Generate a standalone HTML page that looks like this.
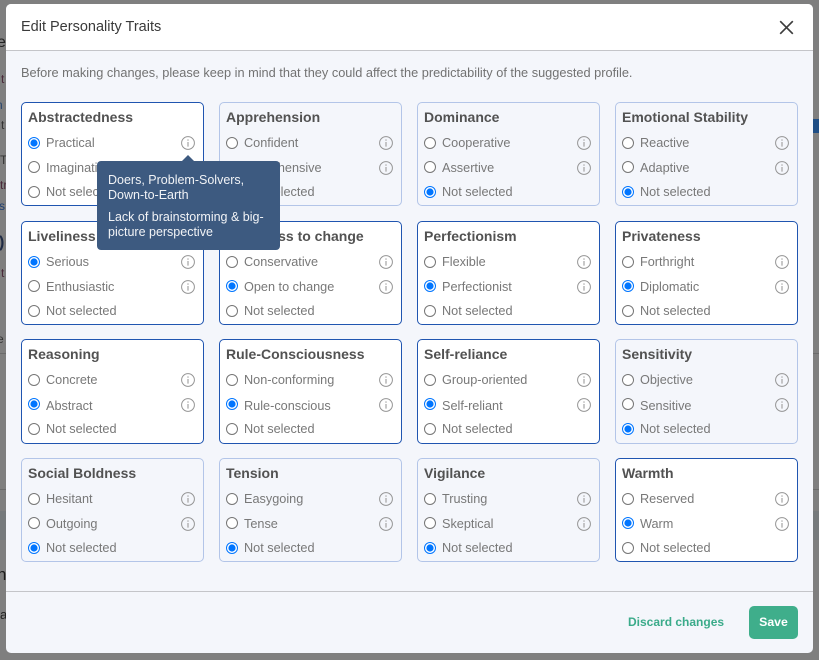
<!DOCTYPE html>
<html>
<head>
<meta charset="utf-8">
<style>
html,body{margin:0;padding:0;width:819px;height:660px;overflow:hidden;background:#7f7f7f;font-family:"Liberation Sans",sans-serif}
.bg{position:absolute;white-space:nowrap;line-height:16px}
.ln{position:absolute;left:0;width:819px;height:1px;background:#6b6b6b}
.band{position:absolute;left:0;width:819px;top:511px;height:29px;background:#767a7c}
.modal{position:absolute;left:6px;top:4px;width:807px;height:649px;background:#f4f6fb;border-radius:5px;overflow:hidden}
.head{position:absolute;left:0;top:0;width:807px;height:46px;background:#fff;border-bottom:1px solid #c4c5c9}
.foot{position:absolute;left:0;top:587px;width:807px;height:1px;background:#c4c5c9}
.t{position:absolute;white-space:nowrap}
.card{position:absolute;width:181px;height:102px;border:1px solid #b3c5e8;border-radius:5px}
.card.a{border-color:#2055b0;background:#fff}
.card b{position:absolute;left:6px;top:6px;font-size:14px;line-height:17px;color:#525252;white-space:nowrap}
.card input{position:absolute;left:6px;margin:0;width:12px;height:12px}
.card span{position:absolute;left:24px;font-size:12.7px;line-height:16px;color:#787878;white-space:nowrap}
.card svg{position:absolute;left:159px;width:14px;height:14px}
.i1{top:34px}.s1{top:32px}.v1{top:33px}
.i2{top:58px}.s2{top:57px}.v2{top:58px}
.i3{top:83px}.s3{top:81px}
.r3 .s2{top:58px}
.tip{position:absolute;left:97px;top:161px;width:183px;height:89px;background:#3d5a80;border-radius:4px}
.arrow{position:absolute;left:182px;top:155px;width:0;height:0;border-left:6px solid transparent;border-right:6px solid transparent;border-bottom:6px solid #3d5a80}
.tip div{position:absolute;left:11px;font-size:12.5px;line-height:15px;color:#f1f3f6;white-space:nowrap}
.save{position:absolute;left:749px;top:606px;width:49px;height:33px;background:#3fae8b;border-radius:5px;color:#fff;font-weight:bold;font-size:12.3px;line-height:33px;text-align:center}
</style>
</head>
<body>
<svg width="0" height="0" style="position:absolute"><defs><symbol id="n" viewBox="0 0 14 14"><circle cx="7" cy="7" r="6.4" fill="none" stroke="#949494" stroke-width="1"/><path d="M7 3.4v1.3M7 6v4.6" fill="none" stroke="#a4a4a4" stroke-width="1.2"/></symbol></defs></svg>

<div class="band"></div>
<div class="ln" style="top:353px"></div>
<div class="ln" style="top:489px"></div>
<div style="position:absolute;left:813px;top:119px;width:6px;height:14px;background:#1f4e85"></div>
<div class="bg" style="left:-3px;top:35px;font-size:16px;color:#222">e</div>
<div class="bg" style="left:1px;top:71px;font-size:12px;color:#4a2a3a">t</div>
<div class="bg" style="left:-4px;top:97px;font-size:12px;color:#26456e">n</div>
<div class="bg" style="left:1px;top:117px;font-size:12px;color:#333">t</div>
<div class="bg" style="left:0;top:152px;font-size:12px;color:#333">T</div>
<div class="bg" style="left:0;top:177px;font-size:12px;color:#4a2a3a">tr</div>
<div class="bg" style="left:-1px;top:198px;font-size:12px;color:#1e3f72">s</div>
<div class="bg" style="left:-1px;top:235px;font-size:16px;font-weight:bold;color:#1e2a44">)</div>
<div class="bg" style="left:1px;top:265px;font-size:12px;color:#4a2a3a">t</div>
<div class="bg" style="left:-3px;top:331px;font-size:12px;color:#333">e</div>
<div class="bg" style="left:-3px;top:567px;font-size:17px;color:#1b1b1b">n</div>
<div class="bg" style="left:0;top:607px;font-size:13px;color:#222">a</div>

<div class="modal">
<div class="head"></div>
<div class="foot"></div>
</div>

<div class="t" style="left:21px;top:18px;font-size:14.5px;line-height:18px;color:#3a3a3a">Edit Personality Traits</div>
<svg style="position:absolute;left:779px;top:20px" width="15" height="15" viewBox="0 0 15 15"><path d="M1.2 1.2L13.8 13.8M13.8 1.2L1.2 13.8" stroke="#3c3c3c" stroke-width="1.7" fill="none"/></svg>
<div class="t" style="left:21px;top:65px;font-size:12.78px;line-height:16px;color:#727272">Before making changes, please keep in mind that they could affect the predictability of the suggested profile.</div>

<!-- Row 1 -->
<div class="card a" style="left:21px;top:102px"><b>Abstractedness</b>
<input type="radio" class="i1" name="a1" checked><span class="s1">Practical</span><svg class="v1"><use href="#n"/></svg>
<input type="radio" class="i2" name="a1"><span class="s2">Imaginative</span><svg class="v2"><use href="#n"/></svg>
<input type="radio" class="i3" name="a1"><span class="s3">Not selected</span></div>
<div class="card" style="left:219px;top:102px"><b>Apprehension</b>
<input type="radio" class="i1" name="a2"><span class="s1">Confident</span><svg class="v1"><use href="#n"/></svg>
<input type="radio" class="i2" name="a2"><span class="s2">Apprehensive</span><svg class="v2"><use href="#n"/></svg>
<input type="radio" class="i3" name="a2" checked><span class="s3">Not selected</span></div>
<div class="card" style="left:417px;top:102px"><b>Dominance</b>
<input type="radio" class="i1" name="a3"><span class="s1">Cooperative</span><svg class="v1"><use href="#n"/></svg>
<input type="radio" class="i2" name="a3"><span class="s2">Assertive</span><svg class="v2"><use href="#n"/></svg>
<input type="radio" class="i3" name="a3" checked><span class="s3">Not selected</span></div>
<div class="card" style="left:615px;top:102px"><b>Emotional Stability</b>
<input type="radio" class="i1" name="a4"><span class="s1">Reactive</span><svg class="v1"><use href="#n"/></svg>
<input type="radio" class="i2" name="a4"><span class="s2">Adaptive</span><svg class="v2"><use href="#n"/></svg>
<input type="radio" class="i3" name="a4" checked><span class="s3">Not selected</span></div>

<!-- Row 2 -->
<div class="card a" style="left:21px;top:221px"><b>Liveliness</b>
<input type="radio" class="i1" name="b1" checked><span class="s1">Serious</span><svg class="v1"><use href="#n"/></svg>
<input type="radio" class="i2" name="b1"><span class="s2">Enthusiastic</span><svg class="v2"><use href="#n"/></svg>
<input type="radio" class="i3" name="b1"><span class="s3">Not selected</span></div>
<div class="card a" style="left:219px;top:221px"><b>Openness to change</b>
<input type="radio" class="i1" name="b2"><span class="s1">Conservative</span><svg class="v1"><use href="#n"/></svg>
<input type="radio" class="i2" name="b2" checked><span class="s2">Open to change</span><svg class="v2"><use href="#n"/></svg>
<input type="radio" class="i3" name="b2"><span class="s3">Not selected</span></div>
<div class="card a" style="left:417px;top:221px"><b>Perfectionism</b>
<input type="radio" class="i1" name="b3"><span class="s1">Flexible</span><svg class="v1"><use href="#n"/></svg>
<input type="radio" class="i2" name="b3" checked><span class="s2">Perfectionist</span><svg class="v2"><use href="#n"/></svg>
<input type="radio" class="i3" name="b3"><span class="s3">Not selected</span></div>
<div class="card a" style="left:615px;top:221px"><b>Privateness</b>
<input type="radio" class="i1" name="b4"><span class="s1">Forthright</span><svg class="v1"><use href="#n"/></svg>
<input type="radio" class="i2" name="b4" checked><span class="s2">Diplomatic</span><svg class="v2"><use href="#n"/></svg>
<input type="radio" class="i3" name="b4"><span class="s3">Not selected</span></div>

<!-- Row 3 -->
<div class="card a r3" style="left:21px;top:339px;height:103px"><b>Reasoning</b>
<input type="radio" class="i1" name="c1"><span class="s1">Concrete</span><svg class="v1"><use href="#n"/></svg>
<input type="radio" class="i2" name="c1" checked><span class="s2">Abstract</span><svg class="v2"><use href="#n"/></svg>
<input type="radio" class="i3" name="c1"><span class="s3">Not selected</span></div>
<div class="card a r3" style="left:219px;top:339px;height:103px"><b>Rule-Consciousness</b>
<input type="radio" class="i1" name="c2"><span class="s1">Non-conforming</span><svg class="v1"><use href="#n"/></svg>
<input type="radio" class="i2" name="c2" checked><span class="s2">Rule-conscious</span><svg class="v2"><use href="#n"/></svg>
<input type="radio" class="i3" name="c2"><span class="s3">Not selected</span></div>
<div class="card a r3" style="left:417px;top:339px;height:103px"><b>Self-reliance</b>
<input type="radio" class="i1" name="c3"><span class="s1">Group-oriented</span><svg class="v1"><use href="#n"/></svg>
<input type="radio" class="i2" name="c3" checked><span class="s2">Self-reliant</span><svg class="v2"><use href="#n"/></svg>
<input type="radio" class="i3" name="c3"><span class="s3">Not selected</span></div>
<div class="card r3" style="left:615px;top:339px;height:103px"><b>Sensitivity</b>
<input type="radio" class="i1" name="c4"><span class="s1">Objective</span><svg class="v1"><use href="#n"/></svg>
<input type="radio" class="i2" name="c4"><span class="s2">Sensitive</span><svg class="v2"><use href="#n"/></svg>
<input type="radio" class="i3" name="c4" checked><span class="s3">Not selected</span></div>

<!-- Row 4 -->
<div class="card" style="left:21px;top:458px"><b>Social Boldness</b>
<input type="radio" class="i1" name="d1"><span class="s1">Hesitant</span><svg class="v1"><use href="#n"/></svg>
<input type="radio" class="i2" name="d1"><span class="s2">Outgoing</span><svg class="v2"><use href="#n"/></svg>
<input type="radio" class="i3" name="d1" checked><span class="s3">Not selected</span></div>
<div class="card" style="left:219px;top:458px"><b>Tension</b>
<input type="radio" class="i1" name="d2"><span class="s1">Easygoing</span><svg class="v1"><use href="#n"/></svg>
<input type="radio" class="i2" name="d2"><span class="s2">Tense</span><svg class="v2"><use href="#n"/></svg>
<input type="radio" class="i3" name="d2" checked><span class="s3">Not selected</span></div>
<div class="card" style="left:417px;top:458px"><b>Vigilance</b>
<input type="radio" class="i1" name="d3"><span class="s1">Trusting</span><svg class="v1"><use href="#n"/></svg>
<input type="radio" class="i2" name="d3"><span class="s2">Skeptical</span><svg class="v2"><use href="#n"/></svg>
<input type="radio" class="i3" name="d3" checked><span class="s3">Not selected</span></div>
<div class="card a" style="left:615px;top:458px"><b>Warmth</b>
<input type="radio" class="i1" name="d4"><span class="s1">Reserved</span><svg class="v1"><use href="#n"/></svg>
<input type="radio" class="i2" name="d4" checked><span class="s2">Warm</span><svg class="v2"><use href="#n"/></svg>
<input type="radio" class="i3" name="d4"><span class="s3">Not selected</span></div>

<!-- Tooltip -->
<div class="arrow"></div>
<div class="tip">
<div style="top:12px">Doers, Problem-Solvers,</div>
<div style="top:27px">Down-to-Earth</div>
<div style="top:49px">Lack of brainstorming &amp; big-</div>
<div style="top:64px">picture perspective</div>
</div>

<div class="t" style="left:628px;top:614px;font-size:12px;line-height:16px;font-weight:bold;color:#3bab8a">Discard changes</div>
<div class="save">Save</div>
</body>
</html>
